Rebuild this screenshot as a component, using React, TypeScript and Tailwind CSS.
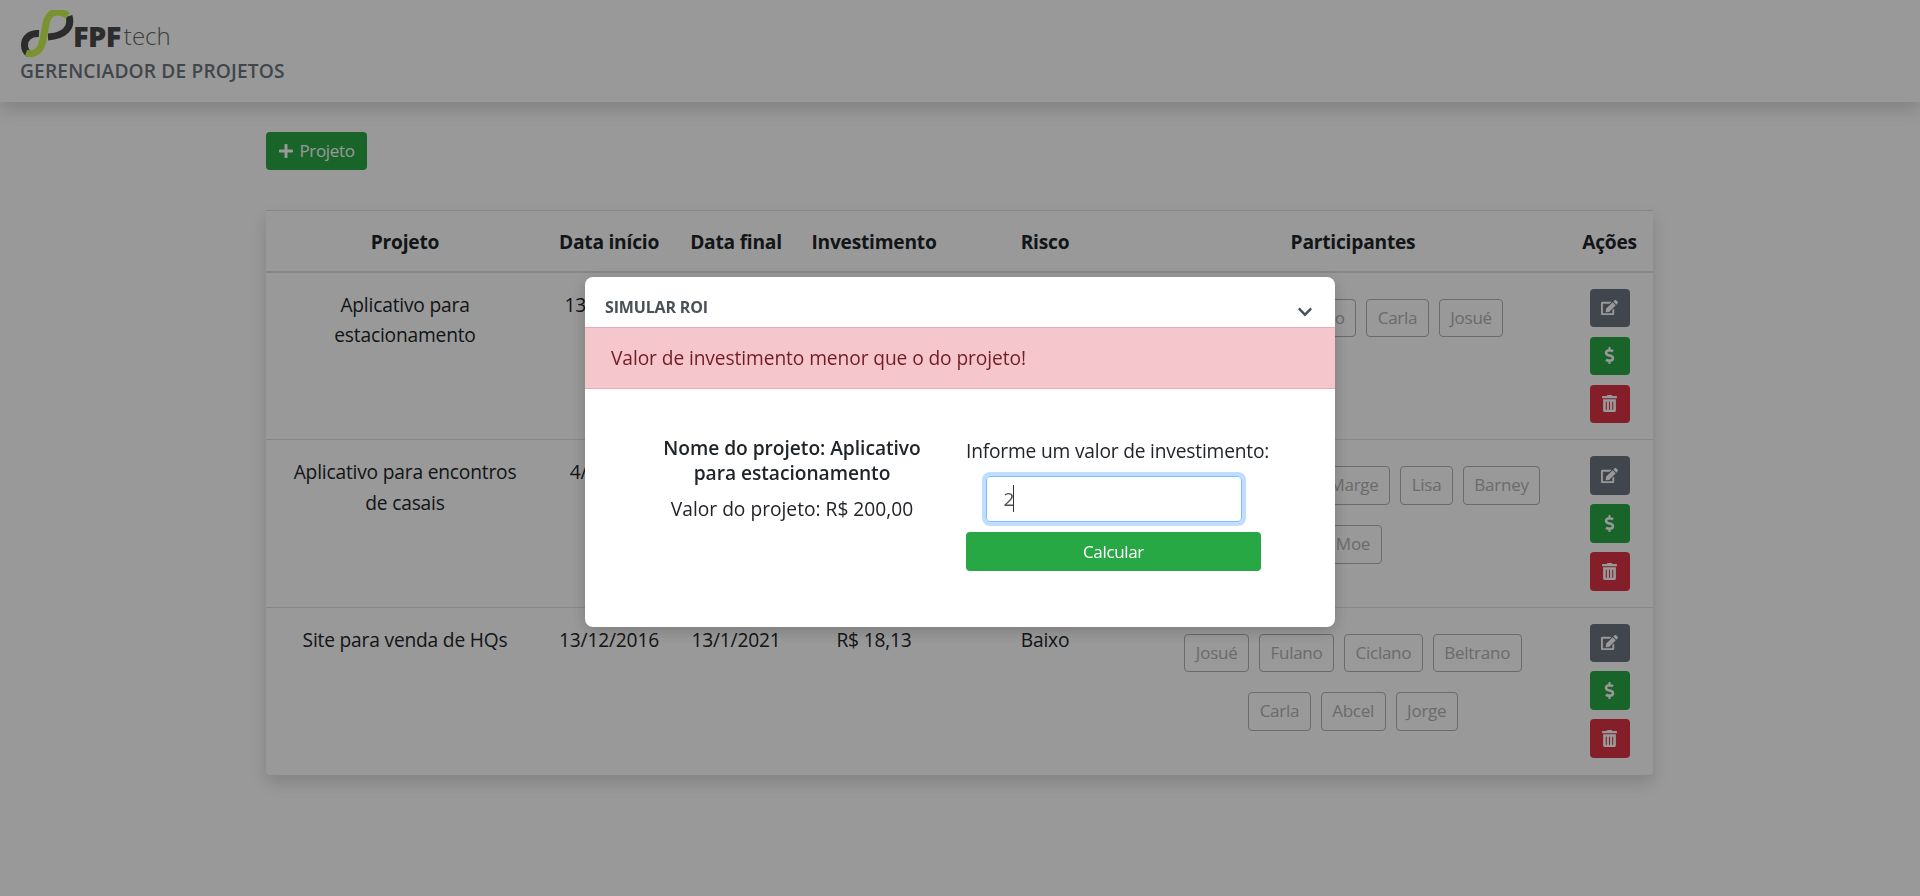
import React from "react";
import { FaPlus, FaEdit, FaDollarSign, FaTrashAlt, FaChevronDown } from "react-icons/fa";

const font = { fontFamily: '"Open Sans", "Noto Sans", sans-serif' };

const rows = [
  { name: "Aplicativo para estacionamento", start: "13/1/2021", end: "13/1/2021", inv: "R$ 200,00", risk: "Baixo", people: ["Abcel", "Ciclano", "Carla", "Josué"] },
  { name: "Aplicativo para encontros de casais", start: "4/1/2021", end: "4/1/2021", inv: "R$ 500,00", risk: "Médio", people: ["Homer", "Bart", "Marge", "Lisa", "Barney", "Moe"] },
  { name: "Site para venda de HQs", start: "13/12/2016", end: "13/1/2021", inv: "R$ 18,13", risk: "Baixo", people: ["Josué", "Fulano", "Ciclano", "Beltrano", "Carla", "Abcel", "Jorge"] },
];

const cols = "grid grid-cols-[278px_130px_124px_152px_190px_426px_87px]";

function Logo() {
  return (
    <div className="flex items-end h-[48px] w-[180px]">
      <svg width="54" height="48" viewBox="18 10 54 48" className="shrink-0">
        <path d="M37 33.500C28 33 22.500 38 22.500 45C22.500 49 24 52 27 54" fill="none" stroke="#4a4a4a" strokeWidth="7" />
        <path d="M67 16C70.500 28 62 36 46 37" fill="none" stroke="#4a4a4a" strokeWidth="7" />
        <path d="M66 15.500C55 9 46 12 44 24L41 40C39 50 33 56 24 53" fill="none" stroke="#cbf650" strokeWidth="7" />
      </svg>
      <span className="ml-[-1px] mb-[7px] text-[29px] leading-[30px] font-extrabold text-[#4a4a4a] tracking-[-0.02em]">FPF</span>
      <span className="ml-[3px] mb-[8px] text-[24px] leading-[28px] font-light text-[#666]">tech</span>
    </div>
  );
}

function ActionBtn({ cls, children }: { cls: string; children: React.ReactNode }) {
  return <button className={`w-[40px] h-[38.4px] rounded-[4px] flex items-center justify-center text-white text-[17px] ${cls}`}>{children}</button>;
}

export default function App() {
  return (
    <div className="relative min-h-[896px] bg-white text-[#212529] overflow-hidden" style={font}>
      <header className="h-[102px] px-[20px] pt-[10px] bg-white shadow-[0_8px_16px_rgba(0,0,0,0.15)]">
        <Logo />
        <div className="text-[19.2px] leading-[26px] font-semibold text-[#6c757d] tracking-[0.007em]">GERENCIADOR DE PROJETOS</div>
      </header>

      <main className="w-[1387px] ml-[266px] pt-[30px]">
        <button className="h-[38.4px] w-[101px] rounded-[4px] bg-[#28a745] text-white flex items-center justify-center gap-[5px] text-[17px] tracking-[-0.02em]">
          <FaPlus className="text-[16px]" /> Projeto
        </button>

        <div className="mt-[40px] rounded-[4px] bg-white shadow-[0_8px_16px_rgba(0,0,0,0.15)]">
          <div className={`${cols} h-[62.400px] pt-[3px] items-center text-center border-b-2 border-[#dee2e6] border-t border-t-[#dee2e6] text-[19.2px] font-bold tracking-[-0.012em]`}>
            <div>Projeto</div>
            <div>Data início</div>
            <div>Data final</div>
            <div>Investimento</div>
            <div>Risco</div>
            <div>Participantes</div>
            <div>Ações</div>
          </div>
          {rows.map((r, i) => (
            <div key={r.name} className={`${cols} text-center text-[19.2px] leading-[30.7px] py-4 tracking-[-0.01em] border-b ${i < 2 ? "border-[#dee2e6]" : "border-transparent"}`}>
              <div className="px-[16px] pt-[1px]">{r.name}</div>
              <div className="pt-[1px]">{r.start}</div>
              <div className="pt-[1px]">{r.end}</div>
              <div className="pt-[1px]">{r.inv}</div>
              <div className="pt-[1px]">{r.risk}</div>
              <div className="pt-[10px] px-[16px] flex flex-wrap justify-center content-start gap-x-[10px] gap-y-[20.600px]">
                {r.people.map((p) => (
                  <span key={p} className="h-[38.4px] px-[10.500px] border border-[#b2b2b2] rounded-[4px] text-[17px] leading-[36px] text-[#b2b2b2] tracking-[-0.015em]">{p}</span>
                ))}
              </div>
              <div className="flex flex-col items-center gap-[9.6px]">
                <ActionBtn cls="bg-[#6c757d]"><FaEdit /></ActionBtn>
                <ActionBtn cls="bg-[#28a745]"><FaDollarSign /></ActionBtn>
                <ActionBtn cls="bg-[#dc3545]"><FaTrashAlt /></ActionBtn>
              </div>
            </div>
          ))}
        </div>
      </main>

      <div className="fixed inset-0 bg-black/40 flex justify-center items-start pt-[277px]">
        <div className="w-[750px] h-[350px] bg-white rounded-[8px] overflow-hidden shadow-[0_4px_16px_rgba(0,0,0,0.2)]">
          <div className="h-[50px] pl-[20px] pr-[22px] flex items-center justify-between">
            <span className="text-[16px] font-bold text-[#495057] tracking-[-0.01em] pt-[10px]">SIMULAR ROI</span>
            <FaChevronDown className="text-[16px] text-[#495057] mt-[19px]" />
          </div>
          <div className="h-[62px] pl-[26px] flex items-center bg-[#f5c6cb] border-y border-[#eba9b1] text-[#721c24] text-[19.2px] tracking-[-0.005em]">
            Valor de investimento menor que o do projeto!
          </div>
          <div className="pt-[46px] pl-[72px] flex gap-[39px]">
            <div className="w-[270px] text-center">
              <div className="text-[19.2px] leading-[25px] font-semibold tracking-[-0.002em]">Nome do projeto: Aplicativo para estacionamento</div>
              <div className="mt-[11px] text-[19.2px] leading-[26px]">Valor do projeto: R$ 200,00</div>
            </div>
            <div className="w-[295px] flex flex-col items-center">
              <div className="pt-[3px] self-start text-[19.2px] leading-[26px] tracking-[-0.01em] whitespace-nowrap">Informe um valor de investimento:</div>
              <div className="relative mt-[12px]">
                <input readOnly value="2" className="block w-[256px] h-[46px] rounded-[4px] border border-[#80bdff] shadow-[0_0_0_4px_rgba(0,123,255,0.25)] pl-[17px] text-[19px] text-[#495057] outline-none" />
                <span className="absolute left-[27px] top-[9px] w-px h-[27px] bg-[#333]" />
              </div>
              <button className="mt-[10px] w-[295px] h-[39px] rounded-[4px] bg-[#28a745] text-white text-[17px] tracking-[-0.02em]">Calcular</button>
            </div>
          </div>
        </div>
      </div>
    </div>
  );
}
